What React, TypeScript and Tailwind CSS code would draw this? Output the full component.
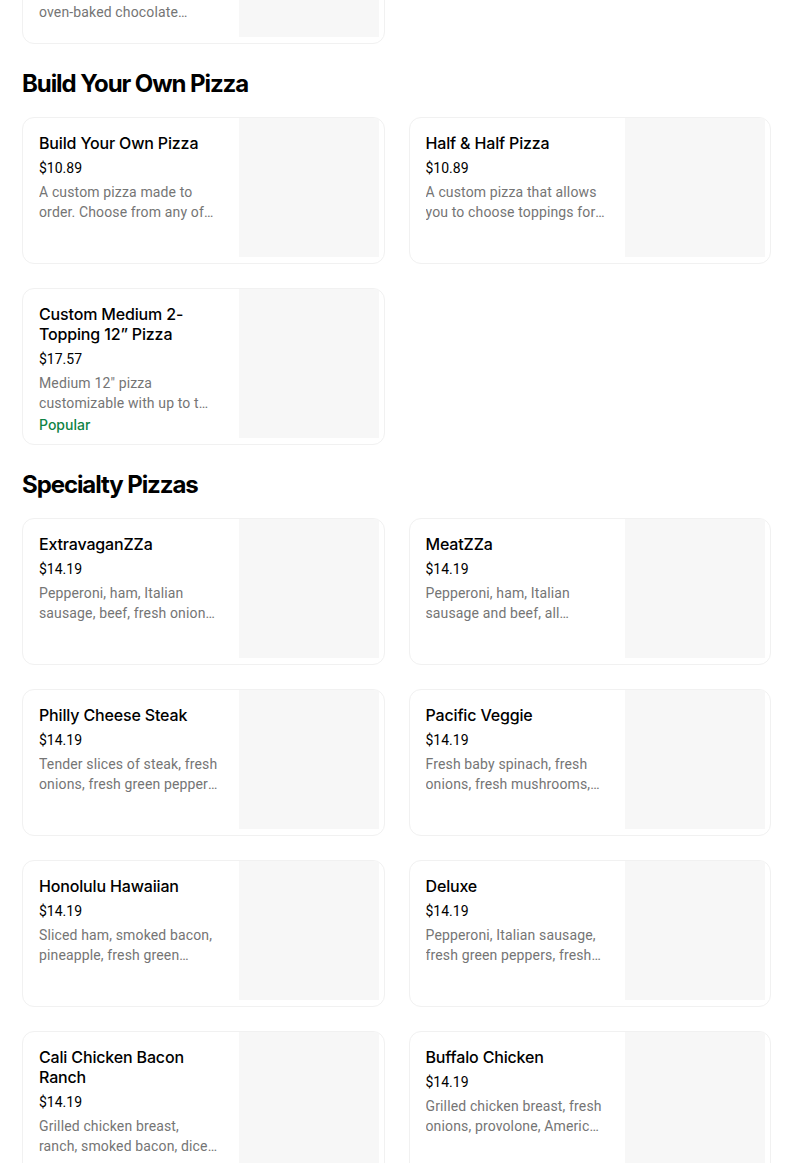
import React from 'react'

type Item = {
  name: string
  price: string
  desc: string
  popular?: boolean
}

const buildYourOwn: Item[] = [
  {
    name: 'Build Your Own Pizza',
    price: '$10.89',
    desc: 'A custom pizza made to order. Choose from any of our delicious crust styles, including Handmade Pan.',
  },
  {
    name: 'Half & Half Pizza',
    price: '$10.89',
    desc: 'A custom pizza that allows you to choose toppings for each half of your pizza.',
  },
  {
    name: 'Custom Medium 2-Topping 12” Pizza',
    price: '$17.57',
    desc: 'Medium 12" pizza customizable with up to two toppings of your choice.',
    popular: true,
  },
]

const specialty: Item[] = [
  {
    name: 'ExtravaganZZa',
    price: '$14.19',
    desc: 'Pepperoni, ham, Italian sausage, beef, fresh onions, fresh green peppers, fresh mushrooms and black olives.',
  },
  {
    name: 'MeatZZa',
    price: '$14.19',
    desc: 'Pepperoni, ham, Italian sausage and beef, all sandwiched between two layers of cheese.',
  },
  {
    name: 'Philly Cheese Steak',
    price: '$14.19',
    desc: 'Tender slices of steak, fresh onions, fresh green peppers, fresh mushrooms, provolone and American cheese.',
  },
  {
    name: 'Pacific Veggie',
    price: '$14.19',
    desc: 'Fresh baby spinach, fresh onions, fresh mushrooms, tomatoes, black olives, feta, provolone and mozzarella.',
  },
  {
    name: 'Honolulu Hawaiian',
    price: '$14.19',
    desc: 'Sliced ham, smoked bacon, pineapple, fresh green peppers, provolone and mozzarella.',
  },
  {
    name: 'Deluxe',
    price: '$14.19',
    desc: 'Pepperoni, Italian sausage, fresh green peppers, fresh mushrooms and fresh onions.',
  },
  {
    name: 'Cali Chicken Bacon Ranch',
    price: '$14.19',
    desc: 'Grilled chicken breast, ranch, smoked bacon, diced tomatoes, provolone and mozzarella.',
  },
  {
    name: 'Buffalo Chicken',
    price: '$14.19',
    desc: 'Grilled chicken breast, fresh onions, provolone, American cheese, cheddar and hot buffalo sauce.',
  },
]

function MenuCard({ item }: { item: Item }) {
  return (
    <div className="flex min-h-[147px] overflow-hidden rounded-xl border border-[#f1f1f1] bg-white">
      <div className="min-w-0 flex-1 pt-[15px] pr-5 pb-[9px] pl-4">
        <div className="text-base leading-5 font-medium tracking-[-0.01em] text-black">{item.name}</div>
        <div className="mt-[5px] font-['Roboto',sans-serif] text-sm leading-5 text-black">{item.price}</div>
        <div className="mt-1 line-clamp-2 font-['Roboto',sans-serif] text-sm leading-5 tracking-[0.01em] text-[#757575]">
          {item.desc}
        </div>
        {item.popular && <div className="mt-[2px] text-sm leading-5 font-medium text-[#0e8345]">Popular</div>}
      </div>
      <div className="mr-[5px] mb-[6px] w-[140px] shrink-0 bg-[#f7f7f7]" />
    </div>
  )
}

function Section({ title, items }: { title: string; items: Item[] }) {
  return (
    <div className="mt-6">
      <h2 className="mb-[17px] text-2xl leading-8 font-bold tracking-[-0.045em] text-black">{title}</h2>
      <div className="grid grid-cols-2 gap-6">
        {items.map((item) => (
          <MenuCard key={item.name} item={item} />
        ))}
      </div>
    </div>
  )
}

export default function App() {
  return (
    <div className="h-[1163px] w-[804px] overflow-hidden bg-white font-['Inter',sans-serif]">
      <div className="-mt-[103px] ml-[22px] w-[749px]">
        {/* dessert card, cut off by the top of the view */}
        <div className="grid grid-cols-2 gap-6">
          <MenuCard
            item={{
              name: 'Marbled Cookie Brownie',
              price: '$8.49',
              desc: 'Cookie and brownie layers, oven-baked chocolate brownies and cookies.',
            }}
          />
        </div>
        <Section title="Build Your Own Pizza" items={buildYourOwn} />
        <Section title="Specialty Pizzas" items={specialty} />
      </div>
    </div>
  )
}
